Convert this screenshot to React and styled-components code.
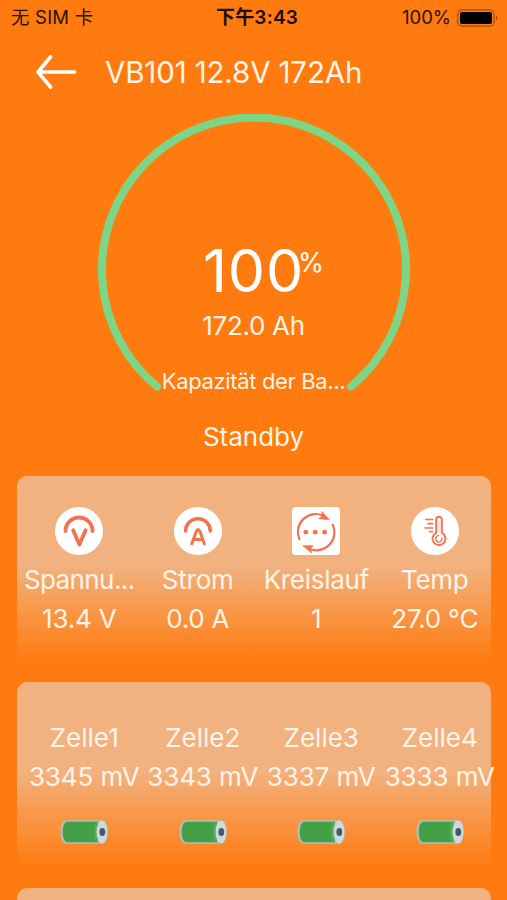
import React from 'react'
import styled, { createGlobalStyle } from 'styled-components'

const GlobalStyle = createGlobalStyle`
    *{
        box-sizing: border-box;
    }
    body{
        margin: 0;
        background-color: #ff7a0f;
        font-family: Inter, "Noto Sans CJK SC", sans-serif;
        overflow: hidden;
    }
`

const Screen = styled.div`
    width: 507px;
    height: 900px;
    overflow: hidden;
    background-color: #ff7a0f;
    color: #fff4e8;
`

const StatusBar = styled.div`
    display: grid;
    grid-template-columns: 1fr auto 1fr;
    align-items: center;
    height: 34px;
    padding: 1px 8px 0 11px;
    font-size: 18.5px;
    line-height: 33px;
    color: #2b1200;
    white-space: nowrap;
`
const Carrier = styled.span`
    letter-spacing: 0.2px;
`
const Time = styled.span`
    margin-left: 4px;
    font-size: 19px;
    font-weight: 600;
    letter-spacing: 0.2px;
    color: #1c0b00;
`
const Power = styled.span`
    display: flex;
    justify-content: flex-end;
    align-items: center;
    gap: 6px;
`

const NavBar = styled.div`
    display: flex;
    align-items: center;
    height: 76px;
    padding-left: 35px;
`
const Title = styled.h1`
    margin: 0 0 0 28px;
    font-size: 29.5px;
    font-weight: 400;
    letter-spacing: -0.15px;
`

const Gauge = styled.div`
    display: grid;
    justify-items: center;
    height: 302px;
    padding-top: 4px;
    &>*{
        grid-area: 1 / 1;
    }
`
const GaugeText = styled.div`
    display: flex;
    flex-direction: column;
    align-items: center;
    padding-top: 126px;
    white-space: nowrap;
`
const Percent = styled.div`
    position: relative;
    font-size: 59px;
    line-height: 61px;
    letter-spacing: 0.8px;
    color: #fff;
    &>sup{
        position: absolute;
        top: 7px;
        left: 95px;
        font-size: 26.5px;
        line-height: 31px;
        letter-spacing: 0;
    }
`
const Capacity = styled.div`
    font-size: 26px;
    line-height: 49px;
    letter-spacing: -0.3px;
`
const Caption = styled.div`
    font-size: 22px;
    line-height: 62px;
    letter-spacing: -0.35px;
`
const State = styled.div`
    height: 49px;
    margin-bottom: 15px;
    font-size: 26px;
    line-height: 49px;
    text-align: center;
`

const Card = styled.section`
    display: grid;
    grid-template-columns: repeat(4, 118.5px);
    width: 474px;
    height: 190px;
    margin: 0 0 16px 17px;
    padding-top: ${({ $top }) => $top}px;
    padding-left: ${({ $left }) => $left || 0}px;
    border-radius: 10px 10px 0 0;
    background: linear-gradient(#f2b280 0%, #f2b280 47%, #f8984a 70%, #ff7a0f 98%);
`
const Cell = styled.div`
    display: flex;
    flex-direction: column;
    align-items: center;
    white-space: nowrap;
    font-size: 26px;
    line-height: 39px;
`
const Label = styled.div`
    letter-spacing: ${({ $spacing }) => $spacing || 0}px;
`
const Value = styled.div`
    letter-spacing: ${({ $spacing }) => $spacing || 0}px;
`
const Icon = styled.svg`
    display: block;
    flex: none;
    width: 48px;
    height: 48px;
    margin-bottom: 5px;
    fill: none;
    stroke: #f2734d;
    stroke-linecap: round;
    stroke-linejoin: round;
`
const CellBattery = styled.svg`
    display: block;
    flex: none;
    width: 48px;
    height: 24px;
    margin-top: 24px;
`

const VoltIcon = () => (
    <Icon viewBox="0 0 48 48">
        <circle cx="24" cy="24" r="24" fill="#fff" stroke="none" />
        <path d="M10.5 24a13.5 13.5 0 0 1 27 0" strokeWidth="3.8" />
        <path d="M18.2 23.2L24.4 37.6L30.6 23.2" strokeWidth="3.8" />
    </Icon>
)

const AmpIcon = () => (
    <Icon viewBox="0 0 48 48">
        <circle cx="24" cy="24" r="24" fill="#fff" stroke="none" />
        <path d="M11.6 24a12.3 12.3 0 0 1 24.7 0" strokeWidth="3.5" />
        <path d="M17.8 36.8L22.2 24.6Q24.1 20.6 26 24.6L30.3 36.8M20 32.5h8.3" strokeWidth="3" />
    </Icon>
)

const CycleIcon = () => (
    <Icon viewBox="0 0 48 48">
        <rect width="48" height="48" rx="4" fill="#fff" stroke="none" />
        <path d="M7.4 32.3A18 18 0 0 1 31 8.5" strokeWidth="2.2" />
        <path d="M40.8 17.8A18 18 0 0 1 17.5 41.9" strokeWidth="2.2" />
        <path d="M30.2 4.8L37.2 12.7L26.7 11.6L30 9z" fill="#f2734d" strokeWidth="0.8" />
        <path d="M11.2 38.8L21 38.8L18.5 41.5L19.5 45.5z" fill="#f2734d" strokeWidth="0.8" />
        <g fill="#f2734d" stroke="none">
            <circle cx="13.8" cy="25.2" r="2.4" />
            <circle cx="23.2" cy="25.2" r="2.4" />
            <circle cx="32.6" cy="25.2" r="2.4" />
        </g>
    </Icon>
)

const TempIcon = () => (
    <Icon viewBox="0 0 48 48">
        <circle cx="24" cy="24" r="24" fill="#fff" stroke="none" />
        <path d="M25.2 25.8V12.6a2.8 2.8 0 0 1 5.6 0v13.2a6.5 6.5 0 1 1-5.6 0z" strokeWidth="2" />
        <path d="M28 15v10" strokeWidth="1" opacity="0.45" />
        <path d="M31 31.3a3.2 3.2 0 1 1-3.4-2.8" strokeWidth="1.5" />
        <path d="M14.8 12.5h7M17 16.6h4.8M14 21h7.8M18.6 24.7h3" strokeWidth="1.6" />
    </Icon>
)

const BatteryIcon = () => (
    <CellBattery viewBox="0 0 48 24">
        <path d="M6.5 0.3H42C45.8 0.3 47.7 6 47.7 12S45.8 23.7 42 23.7H6.5C2.5 23.7 0.4 18 0.4 12S2.5 0.3 6.5 0.3z" fill="#b1bdb5" />
        <path d="M7.5 1.8H38V22.2H7.5C4.2 22.2 2.7 17 2.7 12S4.2 1.8 7.5 1.8z" fill="#43a047" />
        <path d="M35.5 2.2h2.5v19.6h-2.5q-3-9.8 0-19.6z" fill="#55ad59" />
        <ellipse cx="42" cy="12" rx="5.5" ry="11.4" fill="#cfd8dc" />
        <ellipse cx="42.3" cy="12" rx="2.9" ry="3.9" fill="#455a68" />
    </CellBattery>
)

const stats = [
    { label: 'Spannu...', value: '13.4 V', icon: <VoltIcon />, spacing: -0.6 },
    { label: 'Strom', value: '0.0 A', icon: <AmpIcon />, spacing: -0.2 },
    { label: 'Kreislauf', value: '1', icon: <CycleIcon />, spacing: -0.3 },
    { label: 'Temp', value: '27.0 °C', icon: <TempIcon />, spacing: -0.3 },
]

const cells = [
    { label: 'Zelle1', value: '3345 mV' },
    { label: 'Zelle2', value: '3343 mV' },
    { label: 'Zelle3', value: '3337 mV' },
    { label: 'Zelle4', value: '3333 mV' },
]

export default function App() {
    return (
        <>
            <GlobalStyle />
            <Screen>
                <StatusBar>
                    <Carrier>无 SIM 卡</Carrier>
                    <Time>下午3:43</Time>
                    <Power>
                        100%
                        <svg width="42" height="18" viewBox="0 0 42 18">
                            <rect x="0.8" y="0.8" width="36.4" height="16.4" rx="4.5" fill="none" stroke="#a34c08" strokeWidth="1.2" />
                            <rect x="3" y="3" width="32" height="12" rx="2" fill="#000" />
                            <path d="M39.2 6.3q2.2 2.7 0 5.4z" fill="#8a4008" />
                        </svg>
                    </Power>
                </StatusBar>
                <NavBar>
                    <svg width="42" height="34" viewBox="0 0 42 34" fill="none" stroke="#fff" strokeWidth="3.6" strokeLinecap="round" strokeLinejoin="round">
                        <path d="M15.5 2L3 17L15.5 32M3 17H39.5" />
                    </svg>
                    <Title>VB101 12.8V 172Ah</Title>
                </NavBar>
                <Gauge>
                    <svg width="314" height="280" viewBox="0 0 314 280">
                        <path d="M60 272.5A152 152 0 1 1 254 272.5" fill="none" stroke="#7dd687" strokeWidth="8" strokeLinecap="round" />
                    </svg>
                    <GaugeText>
                        <Percent>100<sup>%</sup></Percent>
                        <Capacity>172.0 Ah</Capacity>
                        <Caption>Kapazität der Ba...</Caption>
                    </GaugeText>
                </Gauge>
                <State>Standby</State>
                <Card $top={31} $left={3}>
                    {stats.map((item) => (
                        <Cell key={item.label}>
                            {item.icon}
                            <Label $spacing={item.spacing}>{item.label}</Label>
                            <Value $spacing={-0.2}>{item.value}</Value>
                        </Cell>
                    ))}
                </Card>
                <Card $top={36} $left={8}>
                    {cells.map((item) => (
                        <Cell key={item.label}>
                            <Label>{item.label}</Label>
                            <Value $spacing={-0.1}>{item.value}</Value>
                            <BatteryIcon />
                        </Cell>
                    ))}
                </Card>
                <Card $top={36} />
            </Screen>
        </>
    )
}
